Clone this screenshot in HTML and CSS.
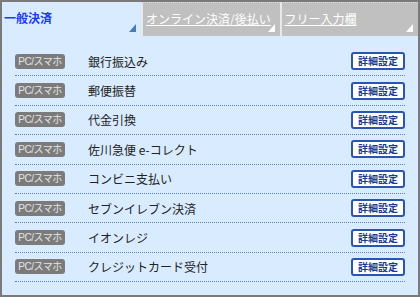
FILE: index.html
```html
<!DOCTYPE html>
<html lang="ja">
<head>
<meta charset="UTF-8">
<title>決済設定</title>
<link rel="stylesheet" href="styles.css">
</head>
<body>
<div class="panel">
    <div class="tabs">
        <a class="tab active" href="#">一般決済</a>
        <a class="tab" href="#">オンライン決済/後払い</a>
        <a class="tab" href="#">フリー入力欄</a>
    </div>
    <ul class="list">
        <li class="row"><span class="badge">PC/スマホ</span><span class="name">銀行振込み</span><a class="btn" href="#">詳細設定</a></li>
        <li class="row"><span class="badge">PC/スマホ</span><span class="name">郵便振替</span><a class="btn" href="#">詳細設定</a></li>
        <li class="row"><span class="badge">PC/スマホ</span><span class="name">代金引換</span><a class="btn" href="#">詳細設定</a></li>
        <li class="row"><span class="badge">PC/スマホ</span><span class="name">佐川急便 e-コレクト</span><a class="btn" href="#">詳細設定</a></li>
        <li class="row"><span class="badge">PC/スマホ</span><span class="name">コンビニ支払い</span><a class="btn" href="#">詳細設定</a></li>
        <li class="row"><span class="badge">PC/スマホ</span><span class="name">セブンイレブン決済</span><a class="btn" href="#">詳細設定</a></li>
        <li class="row"><span class="badge">PC/スマホ</span><span class="name">イオンレジ</span><a class="btn" href="#">詳細設定</a></li>
        <li class="row"><span class="badge">PC/スマホ</span><span class="name">クレジットカード受付</span><a class="btn" href="#">詳細設定</a></li>
    </ul>
</div>
</body>
</html>
```
FILE: styles.css
```css
body { margin: 0; font-family: "Noto Sans CJK JP", sans-serif; }
.panel { width: 420px; height: 297px; box-sizing: border-box; border: 2px solid #7a7a7a; background-color: #d9ecff; }

.tabs { display: flex; height: 34px; }
.tab { position: relative; flex: 1; padding: 7px 0 0 3px; font-size: 12px; color: #fff; background-color: #c0c0c0; border-left: 2px solid #e8e8e8; border-top: 1px dotted #e0e0e0; }
.tab.active { color: #1a3ce6; background-color: #d9ecff; border-left: 0; border-top: 0; text-decoration: none; font-weight: bold; padding-left: 2px; flex: 0 0 137px; }
.tab::after { content: ""; position: absolute; right: 5px; bottom: 4px; width: 0; height: 0; border-left: 7px solid transparent; border-bottom: 8px solid #fff; }
.tab.active::after { border-bottom-color: #4a78b8; }

.list { list-style: none; margin: 0; padding: 11px 13px 0 13px; }
.row { display: flex; align-items: center; height: 28.4px; border-bottom: 1px dotted #5f7f9f; }
.badge { width: 50px; height: 15px; line-height: 15px; margin-left: 0; border-radius: 3px; background-color: #7b7b7b; color: #e4e4e4; font-family: "Liberation Sans", "Noto Sans CJK JP", sans-serif; font-size: 10px; text-align: center; letter-spacing: -0.5px; }
.name { flex: 1; margin-left: 23px; font-size: 12px; color: #222; }
.btn { width: 50px; height: 14px; line-height: 14px; border: 2px solid #2a56b0; border-radius: 3px; background-color: #fff; color: #1b3a8a; font-size: 10px; font-weight: bold; text-align: center; text-decoration: none; }
```
